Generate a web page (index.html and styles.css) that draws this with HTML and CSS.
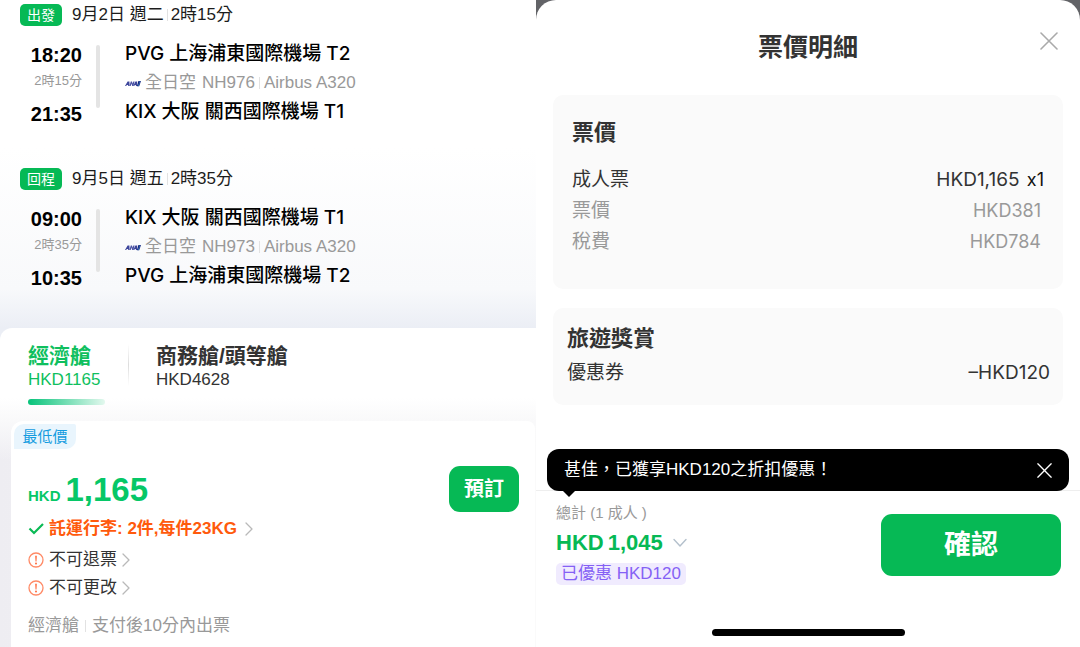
FILE: index.html
```html
<!DOCTYPE html>
<html lang="zh-Hant">
<head>
<meta charset="utf-8">
<meta name="viewport" content="width=device-width, initial-scale=1">
<title>票價明細</title>
<link rel="stylesheet" href="styles.css">
</head>
<body>
<svg class="defs" width="0" height="0" aria-hidden="true">
  <symbol id="ana" viewBox="0 0 16 7">
    <path d="M0 6 2.600 1.600H4.400L4.600 6H3.200L3.100 5H1.800L1.200 6Z" fill="#3c459b"/>
    <path d="M4.400 6 5.800 1.600H7L7.600 3.800 8.300 1.600H9.600L8.400 6H7.200L6.400 3.600 5.700 6Z" fill="#4a52a4"/>
    <path d="M8.200 6 10.400 1.600H12.200L12 6H10.900V5H9.800L9.300 6Z" fill="#3c459b"/>
    <path d="M11.800 6.200 13.400 1H16L14.200 6.200Z" fill="#16247c"/>
    <path d="M12.800 6.200 14.900 1H15.300L13.400 6.200Z" fill="#3fa0dc"/>
  </symbol>
  <symbol id="chevron-right" viewBox="0 0 8 14">
    <path d="M1 1 7 7 1 13" fill="none" stroke="#b9b9b9" stroke-width="1.300" stroke-linecap="round" stroke-linejoin="round"/>
  </symbol>
  <symbol id="alert" viewBox="0 0 16 16">
    <circle cx="8" cy="8" r="7" fill="none" stroke="#ff8a66" stroke-width="1.300"/>
    <path d="M7.200 3.800H8.800L8.500 9.400H7.500Z" fill="#ff6a3c"/>
    <circle cx="8" cy="11.400" r="1" fill="#ff6a3c"/>
  </symbol>
  <symbol id="cross" viewBox="0 0 18 18">
    <path d="M1 1 17 17M17 1 1 17" fill="none" stroke="currentColor" stroke-width="1.600" stroke-linecap="round"/>
  </symbol>
</svg>
<div class="screens">
  <main class="flights">
    <div class="itinerary">
      <section class="leg">
        <header class="leg-head">
          <span class="leg-badge">出發</span>
          <span class="leg-date">9月2日 週二</span>
          <i class="sep"></i>
          <span>2時15分</span>
        </header>
        <div class="leg-body">
          <div class="times">
            <time class="clock">18:20</time>
            <span class="duration">2時15分</span>
            <time class="clock clock-end">21:35</time>
          </div>
          <i class="rail"></i>
          <div class="route">
            <div class="airport">PVG 上海浦東國際機場 T2</div>
            <div class="carrier"><svg class="ana"><use href="#ana"/></svg><span>全日空</span><span class="number">NH976</span><i class="sep"></i><span>Airbus A320</span></div>
            <div class="airport">KIX 大阪 關西國際機場 T1</div>
          </div>
        </div>
      </section>
      <section class="leg">
        <header class="leg-head">
          <span class="leg-badge">回程</span>
          <span class="leg-date">9月5日 週五</span>
          <i class="sep"></i>
          <span>2時35分</span>
        </header>
        <div class="leg-body">
          <div class="times">
            <time class="clock">09:00</time>
            <span class="duration">2時35分</span>
            <time class="clock clock-end">10:35</time>
          </div>
          <i class="rail"></i>
          <div class="route">
            <div class="airport">KIX 大阪 關西國際機場 T1</div>
            <div class="carrier"><svg class="ana"><use href="#ana"/></svg><span>全日空</span><span class="number">NH973</span><i class="sep"></i><span>Airbus A320</span></div>
            <div class="airport">PVG 上海浦東國際機場 T2</div>
          </div>
        </div>
      </section>
    </div>

    <div class="cabins">
      <nav class="tabs">
        <button class="tab tab-on" type="button"><span class="tab-name">經濟艙</span><span class="tab-price">HKD1165</span></button>
        <i class="tab-divider"></i>
        <button class="tab" type="button"><span class="tab-name">商務艙/頭等艙</span><span class="tab-price">HKD4628</span></button>
      </nav>
      <div class="offers">
        <article class="offer">
          <span class="lowest">最低價</span>
          <div class="offer-body">
            <div class="offer-info">
              <p class="price"><span class="currency">HKD</span><span class="amount">1,165</span></p>
              <a class="rule rule-baggage" href="#baggage"><svg class="tick" viewBox="0 0 16 16"><path d="M1.500 7.500 6 12 15 3" fill="none" stroke="#0aba55" stroke-width="2.200"/></svg><span>託運行李: 2件,每件23KG</span><svg class="chevron"><use href="#chevron-right"/></svg></a>
              <a class="rule" href="#refund"><svg class="alert"><use href="#alert"/></svg><span>不可退票</span><svg class="chevron"><use href="#chevron-right"/></svg></a>
              <a class="rule" href="#change"><svg class="alert"><use href="#alert"/></svg><span>不可更改</span><svg class="chevron"><use href="#chevron-right"/></svg></a>
              <p class="issue"><span>經濟艙</span><i class="sep"></i><span>支付後10分內出票</span></p>
            </div>
            <button class="book" type="button">預訂</button>
          </div>
        </article>
      </div>
    </div>
  </main>

  <aside class="backdrop">
    <div class="sheet">
      <header class="sheet-head">
        <h1 class="sheet-title">票價明細</h1>
        <button class="close" type="button" aria-label="關閉"><svg class="close-icon"><use href="#cross"/></svg></button>
      </header>
      <div class="cards">
        <section class="card card-fare">
          <h2 class="card-title">票價</h2>
          <dl class="lines">
            <div class="line"><dt>成人票</dt><dd>HKD1,165 <span class="count">x1</span></dd></div>
            <div class="line line-sub"><dt>票價</dt><dd>HKD381</dd></div>
            <div class="line line-sub"><dt>稅費</dt><dd>HKD784</dd></div>
          </dl>
        </section>
        <section class="card card-reward">
          <h2 class="card-title">旅遊獎賞</h2>
          <dl class="lines">
            <div class="line"><dt>優惠券</dt><dd>–HKD120</dd></div>
          </dl>
        </section>
      </div>
      <footer class="checkout">
        <div class="toast" role="status">
          <span>甚佳，已獲享HKD120之折扣優惠！</span>
          <button class="toast-close" type="button" aria-label="關閉提示"><svg class="toast-icon"><use href="#cross"/></svg></button>
        </div>
        <div class="pay">
          <div class="totals">
            <span class="total-label">總計 (1 成人 )</span>
            <button class="total" type="button"><span>HKD</span><span>1,045</span><svg class="down" viewBox="0 0 14 10"><path d="M1 1.500 7 8 13 1.500" fill="none" stroke="#b4c0cc" stroke-width="1.400" stroke-linecap="round" stroke-linejoin="round"/></svg></button>
            <span class="saved">已優惠 HKD120</span>
          </div>
          <button class="confirm" type="button">確認</button>
        </div>
        <div class="home-bar"></div>
      </footer>
    </div>
  </aside>
</div>
</body>
</html>
```
FILE: styles.css
```css
* {
  box-sizing: border-box;
}

body {
  margin: 0;
  color: #1c1c1c;
  background: #fff;
  font-family: "Liberation Sans", "Noto Sans CJK TC", sans-serif;
  font-size: 17px;
  line-height: 22px;
}

h1, h2, p, dl, dd {
  margin: 0;
}

button {
  margin: 0;
  padding: 0;
  border: 0;
  background: none;
  color: inherit;
  font: inherit;
  cursor: pointer;
}

a {
  color: inherit;
  text-decoration: none;
}

svg {
  flex: none;
}

.defs {
  position: absolute;
}

.screens {
  display: grid;
  grid-template-columns: 67fr 68fr;
  min-height: 100vh;
}

.sep {
  flex: none;
  width: 1px;
  height: 12px;
  background: #e2e2e2;
}

/* Itinerary */
.flights {
  display: flex;
  flex-direction: column;
}

.itinerary {
  display: flex;
  flex-direction: column;
  gap: 40px;
  padding: 4px 20px 36px;
  background: linear-gradient(#fff 45%, #f8f9fb 88%, #ebeef5);
}

.leg-head {
  display: flex;
  align-items: center;
  gap: 3px;
}

.leg-badge {
  width: 42px;
  margin-right: 7px;
  border-radius: 5px;
  background: #06b955;
  color: #fff;
  font-size: 14px;
  text-align: center;
}

.leg-body {
  display: flex;
  margin-top: 14px;
}

.times {
  display: flex;
  flex-direction: column;
  width: 62px;
  padding-top: 1px;
  text-align: right;
}

.clock {
  color: #000;
  font-size: 20px;
  font-weight: 700;
  line-height: 28px;
}

.clock-end {
  margin-top: 7px;
}

.duration {
  color: #999;
  font-size: 13px;
  line-height: 24px;
}

.rail {
  width: 4px;
  height: 63px;
  margin: 5px 25px 0 14px;
  border-radius: 2px;
  background: #e4e4e4;
}

.airport {
  color: #000;
  font-family: Inter, "Noto Sans CJK TC", sans-serif;
  font-size: 19px;
  font-weight: 500;
  line-height: 28px;
}

.carrier {
  display: flex;
  align-items: center;
  gap: 4px;
  color: #999;
  line-height: 30px;
}

.ana {
  width: 16px;
  height: 7px;
}

.number {
  margin-left: 2px;
}

/* Cabin tabs */
.cabins {
  display: flex;
  flex: 1;
  flex-direction: column;
  background: linear-gradient(#ebeef5 20px, #fff 20px);
}

.tabs {
  display: flex;
  align-items: flex-start;
  padding: 14px 28px 16px;
  border-top-left-radius: 12px;
  background: linear-gradient(#fff 75%, #f9f9fa);
}

.tab {
  display: flex;
  flex-direction: column;
  align-items: flex-start;
  color: #333;
  text-align: left;
}

.tab-name {
  font-size: 21px;
  font-weight: 700;
  line-height: 28px;
}

.tab-price {
  line-height: 20px;
}

.tab-on {
  color: #0fbf5e;
}

.tab-on::after {
  content: "";
  width: 77px;
  height: 6px;
  margin-top: 9px;
  border-radius: 3px;
  background: linear-gradient(90deg, #07c37a, #e3f8ee);
}

.tab-divider {
  width: 1px;
  height: 42px;
  margin: 2px 27px 0 23px;
  background: linear-gradient(#fff, #ddd, #fff);
}

/* Offer */
.offers {
  display: flex;
  flex: 1;
  padding: 0 1px 0 11px;
  background:
    linear-gradient(#f9f9fa, rgb(249 249 250 / 0) 40px),
    linear-gradient(90deg, #eeedf2, #fafafa);
}

.offer {
  flex: 1;
  padding: 3px 16px 8px 3px;
  border-radius: 12px 8px 0 0;
  background: #fff;
}

.lowest {
  display: block;
  width: 62px;
  border-radius: 10px 2px 10px 0;
  background: #e9f5fd;
  color: #149ce0;
  font-size: 15px;
  line-height: 25px;
  text-align: center;
}

.offer-body {
  display: flex;
  align-items: flex-start;
  justify-content: space-between;
  padding: 17px 0 0 14px;
}

.price {
  display: flex;
  align-items: baseline;
  gap: 5px;
  margin-top: 6px;
  color: #06c767;
  font-weight: 700;
  line-height: 36px;
}

.currency {
  font-size: 15px;
}

.amount {
  font-size: 33px;
}

.rule {
  display: flex;
  align-items: center;
  gap: 5px;
  color: #333;
  line-height: 28px;
}

.rule-baggage {
  margin: 1px 0 3px;
  color: #ff5a0c;
  font-weight: 700;
}

.rule-baggage .chevron {
  margin-left: 3px;
}

.tick,
.alert {
  width: 16px;
  height: 16px;
}

.chevron {
  width: 8px;
  height: 14px;
}

.issue {
  display: flex;
  align-items: center;
  gap: 6px;
  margin-top: 13px;
  color: #999;
}

.book {
  width: 70px;
  border-radius: 11px;
  background: #06b955;
  color: #fff;
  font-size: 20px;
  font-weight: 700;
  line-height: 46px;
}

/* Fare sheet */
.backdrop {
  display: flex;
  background: #626367;
}

.sheet {
  display: flex;
  flex: 1;
  flex-direction: column;
  border-radius: 20px 20px 0 0;
  background: #fff;
}

.sheet-head {
  display: grid;
  grid-template-columns: 1fr auto 1fr;
  align-items: start;
  padding: 32px 22px 33px;
}

.sheet-title {
  grid-column: 2;
  color: #333;
  font-size: 25px;
  font-weight: 700;
  line-height: 30px;
}

.close {
  display: flex;
  justify-self: end;
  color: #aaa;
}

.close-icon {
  width: 18px;
  height: 18px;
}

.cards {
  display: flex;
  flex: 1;
  flex-direction: column;
  gap: 19px;
  padding: 0 17px 84px;
}

.card {
  border-radius: 10px;
  background: #fafafa;
  color: #333;
  font-family: Inter, "Noto Sans CJK TC", sans-serif;
}

.card-fare {
  padding: 22px 19px 32px;
}

.card-reward {
  padding: 15px 13px 17px 14px;
}

.card-title {
  font-size: 22px;
  font-weight: 700;
  line-height: 30px;
}

.lines {
  font-size: 19px;
  line-height: 31px;
}

.card-fare .lines {
  margin-top: 17px;
}

.card-reward .lines {
  margin-top: 4px;
}

.line {
  display: flex;
  justify-content: space-between;
}

.line-sub {
  color: #999;
}

.line-sub dd {
  padding-right: 3px;
  font-size: 18px;
}

.count {
  margin-left: 2px;
  color: #111;
  font-size: 18px;
}

/* Checkout */
.checkout {
  position: relative;
  border-top: 1px solid #eee;
  padding: 12px 19px 11px 20px;
}

.toast {
  position: absolute;
  right: 11px;
  bottom: 100%;
  left: 11px;
  display: flex;
  align-items: center;
  justify-content: space-between;
  padding: 0 17px;
  border-radius: 12px;
  background: #000;
  color: #fff;
  line-height: 42px;
}

.toast::after {
  content: "";
  position: absolute;
  top: 100%;
  left: 16px;
  border: 6px solid transparent;
  border-top-color: #000;
  border-bottom: 0;
}

.toast-close {
  display: flex;
}

.toast-icon {
  width: 15px;
  height: 15px;
}

.pay {
  display: flex;
  align-items: flex-start;
  justify-content: space-between;
}

.totals {
  display: flex;
  flex-direction: column;
  align-items: flex-start;
}

.total-label {
  color: #999;
  font-size: 15px;
  line-height: 20px;
}

.total {
  display: flex;
  align-items: center;
  gap: 4px;
  margin: 5px 0;
  color: #06b955;
  font-size: 22px;
  font-weight: 700;
  line-height: 30px;
}

.down {
  width: 14px;
  height: 10px;
  margin-left: 6px;
}

.saved {
  padding: 0 5px;
  border-radius: 5px;
  background: #f0ebfe;
  color: #8561f5;
}

.confirm {
  width: 180px;
  margin-top: 11px;
  border-radius: 11px;
  background: #06b955;
  color: #fff;
  font-size: 27px;
  font-weight: 700;
  line-height: 62px;
}

.home-bar {
  width: 193px;
  height: 7px;
  margin: 44px auto 0;
  border-radius: 4px;
  background: #000;
}
```
